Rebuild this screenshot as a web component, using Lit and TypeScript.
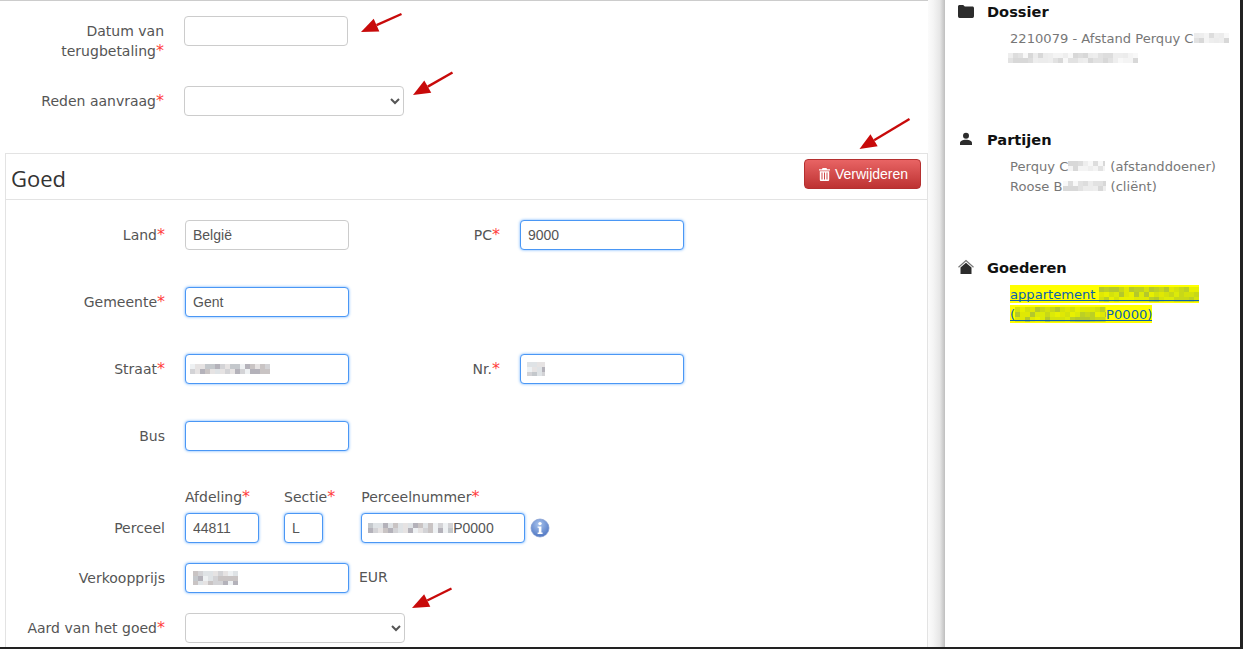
import { LitElement, html, css, svg } from "lit";
import { customElement } from "lit/decorators.js";

const GREY = ["#e6e3e3", "#d3d3d6", "#c4c8cc", "#b4b2ba", "#dfe3e6", "#c9c4c4", "#eef1f3"];
const PALE = ["#eeeeee", "#e2e2e2", "#f4f4f4", "#d8d8d8", "#ececec", "#f8f8f8", "#dddddd"];
const YEL = ["#dcea08", "#c8d818", "#e8f000", "#b4c82c", "#d4e20c", "#bcd024", "#e0e804"];

/* mosaic standing in for the censored text in the reference */
function mosaic(w: number, h: number, seed: number, palette = GREY, cell = 5) {
  let s = seed;
  const rects = [];
  for (let y = 0; y < h; y += cell) {
    for (let x = 0; x < w; x += cell) {
      s = (s * 9301 + 49297) % 233280;
      rects.push(svg`<rect x=${x} y=${y} width=${cell} height=${cell} fill=${palette[(s >> 3) % palette.length]}></rect>`);
    }
  }
  return html`<svg class="mosaic" width=${w} height=${h} viewBox="0 0 ${w} ${h}" shape-rendering="crispEdges">${rects}</svg>`;
}

const arrow = (x1: number, y1: number, x2: number, y2: number) => {
  const dx = x2 - x1, dy = y2 - y1;
  const len = Math.hypot(dx, dy);
  const ux = dx / len, uy = dy / len;
  const bx = x2 - ux * 17, by = y2 - uy * 17;
  const nx = -uy, ny = ux;
  const pts = `${x2},${y2} ${bx + nx * 7},${by + ny * 7} ${bx - nx * 7},${by - ny * 7}`;
  return svg`<line x1=${x1} y1=${y1} x2=${bx} y2=${by} stroke="#c80a0a" stroke-width="2.4"></line><polygon points=${pts} fill="#c80a0a"></polygon>`;
};

@customElement("app-root")
export class AppRoot extends LitElement {
  static styles = css`
    :host { display: block; width: 1243px; height: 649px; overflow: hidden; position: relative; background: #fff; }
    * { box-sizing: border-box; }
    .window { display: flex; height: 647px; border-right: 3px solid #222; }
    .frame-bottom { height: 2px; background: #222; }
    .main { flex: 0 0 928px; display: flex; flex-direction: column; border-top: 1px solid #ccc; overflow: hidden; }
    .gutter { flex: 0 0 17px; background: linear-gradient(to right, #fbfbfb, #f5f5f5 30%, #e6e6e6 70%, #bebebe); }
    .side { flex: 1; background: #fff; padding: 0 0 0 13px; font: 13.1px "DejaVu Sans", sans-serif; color: #777; }

    .lbl { font: 14px/20px "DejaVu Sans", sans-serif; color: #555; text-align: right; }
    .req { color: #ff4040; font-size: 16px; line-height: 0; }
    input, .input, select {
      display: block; height: 30px; border: 1px solid #ccc; border-radius: 4px; background: #fff;
      font: 14px "Liberation Sans", sans-serif; color: #555; padding: 0 7px; outline: none;
    }
    .input { display: flex; align-items: center; }
    .focus { border-color: #4a97f5; box-shadow: 0 0 3px #6aaeff; }
    .w164 { width: 164px; }
    .w74 { width: 74px; }
    .w39 { width: 39px; }
    .w220 { width: 220px; padding: 0 4px; }

    .top { padding: 15px 0 0; display: flex; flex-direction: column; }
    .top .row { display: grid; grid-template-columns: 164px auto; column-gap: 20px; justify-content: start; }
    .top .row1 { height: 70px; }
    .top .lbl { padding-top: 5px; }

    .panel { margin: 37px 0 0 5px; width: 923px; flex: 1; border: 1px solid #e3e3e3; border-bottom: 0; }
    .head { height: 46px; border-bottom: 1px solid #e3e3e3; display: flex; align-items: center; justify-content: space-between; padding: 0 5px 0 6px; }
    h2 { margin: 2px 0 0 -1px; font: 400 22px "Open Sans", sans-serif; color: #333; }
    .btn {
      display: flex; align-items: center; gap: 5px; width: 117px; height: 30px; justify-content: center;
      background: linear-gradient(to bottom, #e86464, #bd3232); border: 1px solid #b53030; border-radius: 4px;
      color: #fff; font: 14px "Liberation Sans", sans-serif; padding: 0 0 0 2px; margin: -5px 1px 0 0;
    }
    .body { padding: 20px 0 0; display: flex; flex-direction: column; }
    .f { display: grid; grid-template-columns: 159px 164px; column-gap: 20px; height: 67px; }
    .f .lbl, .grow .lbl { padding-top: 5px; }
    .f2 { grid-template-columns: 159px 164px 131px 164px; }

    .parcel { display: flex; margin-top: -1px; }
    .parcel .lbl { width: 159px; flex: none; padding-top: 31px; margin-right: 20px; }
    .cell { display: flex; flex-direction: column; margin-right: 25px; }
    .cell.c3 { margin-left: 1px; margin-right: 5px; }
    .sub { font: 14px/20px "DejaVu Sans", sans-serif; color: #555; margin-bottom: 6px; white-space: nowrap; }
    .info { width: 20px; height: 20px; flex: none; align-self: flex-end; margin-bottom: 5px; }

    .grow { display: flex; height: 50px; }
    .grow.first { margin-top: 20px; }
    .grow .lbl { width: 159px; flex: none; margin-right: 20px; white-space: nowrap; }
    .eur { font: 14px/20px "DejaVu Sans", sans-serif; color: #555; padding: 4px 0 0 10px; }

    .inset-a { margin-left: -3px; }
    .inset-b { margin-left: -1px; }

    .sec { height: 128px; }
    .sec-h { display: flex; align-items: center; height: 22px; }
    .sec-h svg { width: 16px; height: 16px; flex: none; }
    .sec-h b { font: 700 14.6px "DejaVu Sans", sans-serif; color: #111; margin-left: 13px; }
    .lines { margin: 6px 0 0 52px; white-space: nowrap; }
    .lines div { display: flex; align-items: center; height: 20px; }
    .gap { margin-right: 5px; }
    .edge { margin-left: -2px; }
    .mosaic { display: block; flex: none; }
    .hl { position: relative; background: #ff0; color: #0a62ad; text-decoration: none; display: inline-flex; align-items: center; height: 18px; }
    .hl::after { content: ""; position: absolute; left: 0; right: 0; bottom: 2px; height: 1px; background: #0a62ad; }
    .space { margin-left: 3px; }
    .arrows { position: absolute; left: 0; top: 0; pointer-events: none; }
  `;

  private star() { return html`<span class="req">*</span>`; }

  render() {
    return html`
      <div class="window">
        <div class="main">
          <div class="top">
            <div class="row row1">
              <div class="lbl">Datum van<br />terugbetaling${this.star()}</div>
              <input class="w164" />
            </div>
            <div class="row row2">
              <div class="lbl">Reden aanvraag${this.star()}</div>
              <select class="w220"><option></option></select>
            </div>
          </div>
          <div class="panel">
            <div class="head">
              <h2>Goed</h2>
              <button class="btn">
                <svg width="11" height="13" viewBox="0 0 11 13" fill="#fff">
                  <path d="M3.500 0h4l.5 1.200h3V2.500H0V1.200h3zM.8 3.300h9.400v8.400c0 .7-.6 1.300-1.300 1.300H2.100C1.400 13 .8 12.400.8 11.700zm1.700 1.200v7h1v-7zm2.500 0v7h1v-7zm2.500 0v7h1v-7z" />
                </svg>
                Verwijderen
              </button>
            </div>
            <div class="body">
              <div class="f f2">
                <div class="lbl">Land${this.star()}</div>
                <input class="w164" value="België" />
                <div class="lbl">PC${this.star()}</div>
                <input class="w164 focus" value="9000" />
              </div>
              <div class="f">
                <div class="lbl">Gemeente${this.star()}</div>
                <input class="w164 focus" value="Gent" />
              </div>
              <div class="f f2">
                <div class="lbl">Straat${this.star()}</div>
                <div class="input w164 focus"><span class="inset-a">${mosaic(80, 10, 7)}</span></div>
                <div class="lbl">Nr.${this.star()}</div>
                <div class="input w164 focus"><span class="inset-b">${mosaic(18, 14, 3)}</span></div>
              </div>
              <div class="f">
                <div class="lbl">Bus</div>
                <input class="w164 focus" />
              </div>
              <div class="parcel">
                <div class="lbl">Perceel</div>
                <div class="cell">
                  <div class="sub">Afdeling${this.star()}</div>
                  <input class="focus w74" value="44811" />
                </div>
                <div class="cell">
                  <div class="sub">Sectie${this.star()}</div>
                  <input class="focus w39" value="L" />
                </div>
                <div class="cell c3">
                  <div class="sub">Perceelnummer${this.star()}</div>
                  <div class="input focus w164"><span class="inset-b">${mosaic(85, 10, 11)}</span>P0000</div>
                </div>
                <svg class="info" viewBox="0 0 20 20">
                  <defs>
                    <radialGradient id="ig" cx="45%" cy="30%" r="75%"><stop offset="0" stop-color="#a9c4ee"></stop><stop offset="1" stop-color="#4a72c0"></stop></radialGradient>
                  </defs>
                  <circle cx="10" cy="10" r="9" fill="url(#ig)" stroke="#7f9ad0" stroke-width=".7"></circle>
                  <circle cx="10" cy="5.600" r="1.700" fill="#fff"></circle>
                  <path d="M7.600 8.400h3.800v6.200h1.200v1.300H7.600v-1.300h1.200V9.700H7.600z" fill="#fff"></path>
                </svg>
              </div>
              <div class="grow first">
                <div class="lbl">Verkoopprijs</div>
                <div class="input focus w164">${mosaic(45, 14, 5)}</div>
                <div class="eur">EUR</div>
              </div>
              <div class="grow">
                <div class="lbl">Aard van het goed${this.star()}</div>
                <select class="w220"><option></option></select>
              </div>
            </div>
          </div>
        </div>
        <div class="gutter"></div>
        <aside class="side">
          <section class="sec">
            <div class="sec-h">
              <svg viewBox="0 0 16 16"><path fill="#2c2c2c" d="M0 3.500C0 2.600.7 2 1.500 2h3.700l1.600 1.400h7.600c.9 0 1.600.7 1.600 1.600v8c0 1-.7 2-1.600 2H1.600C.7 15 0 14 0 13z"></path></svg>
              <b>Dossier</b>
            </div>
            <div class="lines">
              <div>2210079 - Afstand Perquy C${mosaic(35, 10, 4, PALE)}</div>
              <div><span class="edge">${mosaic(130, 10, 9, PALE)}</span></div>
            </div>
          </section>
          <section class="sec">
            <div class="sec-h">
              <svg viewBox="0 0 16 16"><circle cx="8" cy="4.800" r="3" fill="#2c2c2c"></circle><path fill="#2c2c2c" d="M2 14v-1.800C2 10 4.500 8.800 8 8.800s6 1.200 6 3.400V14z"></path></svg>
              <b>Partijen</b>
            </div>
            <div class="lines">
              <div>Perquy C<span class="gap">${mosaic(37, 10, 13, PALE)}</span>(afstanddoener)</div>
              <div>Roose B<span class="gap">${mosaic(43, 10, 17, PALE)}</span>(cliënt)</div>
            </div>
          </section>
          <section class="sec">
            <div class="sec-h">
              <svg viewBox="0 0 16 16"><path fill="none" stroke="#777" stroke-width="1.200" d="M.5 8.200 8 1.500l7.500 6.700"></path><path fill="#2c2c2c" d="M2.500 8.500 8 3.700l5.500 4.800V15h-11z"></path></svg>
              <b>Goederen</b>
            </div>
            <div class="lines">
              <div><a class="hl">appartement<span class="space">${mosaic(100, 15, 21, YEL)}</span></a></div>
              <div><a class="hl">(${mosaic(91, 15, 23, YEL)}P0000)</a></div>
            </div>
          </section>
        </aside>
      </div>
      <div class="frame-bottom"></div>
      <svg class="arrows" width="1243" height="649" viewBox="0 0 1243 649">
        ${arrow(401.5, 14, 361, 32)} ${arrow(452.5, 72.5, 413, 95)} ${arrow(909.5, 119, 859.5, 149)} ${arrow(451.5, 588.5, 412, 608)}
      </svg>
    `;
  }
}
